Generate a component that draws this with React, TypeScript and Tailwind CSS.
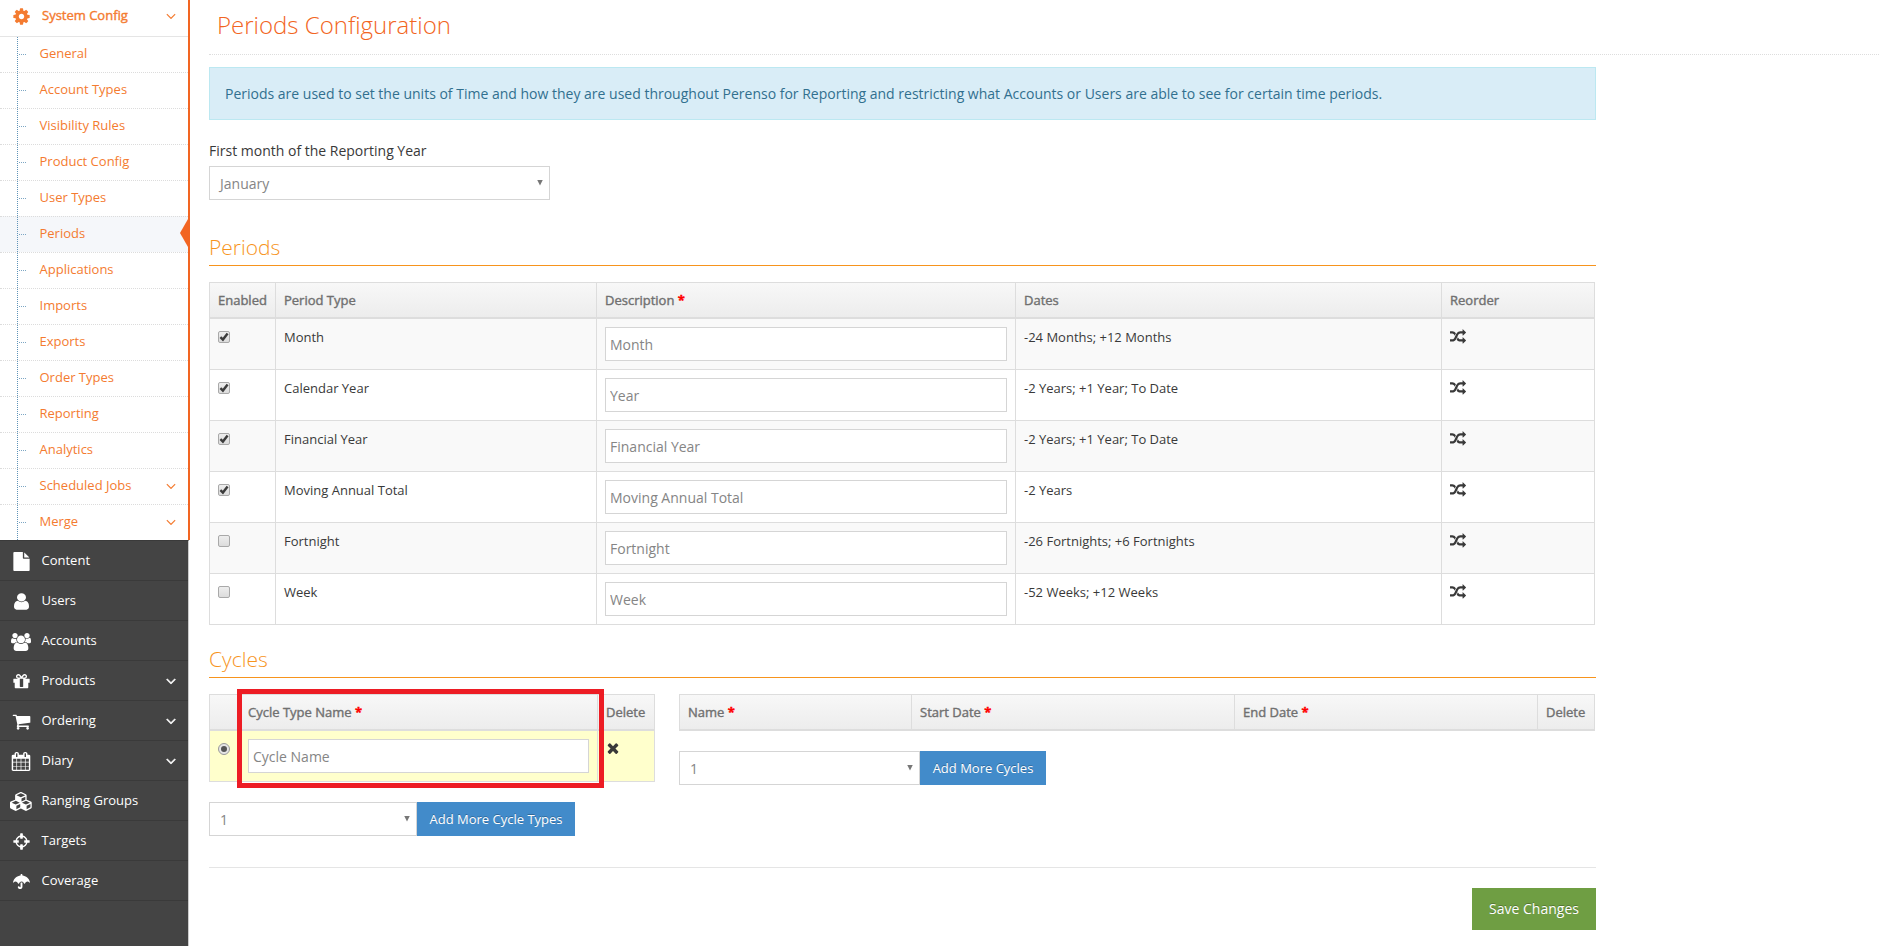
import type { ReactNode } from 'react';
import { FaUmbrella } from 'react-icons/fa';

const ICONS = {
  cog: 'M1152 896q0-106-75-181t-181-75-181 75-75 181 75 181 181 75 181-75 75-181zm512-109v222q0 12-8 23t-20 13l-185 28q-19 54-39 91 35 50 107 138 10 12 10 25t-9 23q-27 37-99 108t-94 71q-12 0-26-9l-138-108q-44 23-91 38-16 136-29 186-7 28-36 28h-222q-14 0-24.5-8.5t-11.5-21.5l-28-184q-49-16-90-37l-141 107q-10 9-25 9-14 0-25-11-126-114-165-168-7-10-7-23 0-12 8-23 15-21 51-66.5t54-70.5q-27-50-41-99l-183-27q-13-2-21-12.5t-8-23.5v-222q0-12 8-23t19-13l186-28q14-46 39-92-40-57-107-138-10-12-10-24 0-10 9-23 26-36 98.5-107.5t94.5-71.5q13 0 26 10l138 107q44-23 91-38 16-136 29-186 7-28 36-28h222q14 0 24.5 8.5t11.5 21.5l28 184q49 16 90 37l142-107q9-9 24-9 13 0 25 10 129 119 165 170 7 8 7 22 0 12-8 23-15 21-51 66.5t-54 70.5q26 50 41 98l183 28q13 2 21 12.5t8 23.5z',
  file: 'M1152 512v-472q22 14 36 28l408 408q14 14 28 36h-472zm-128 32q0 40 28 68t68 28h544v1056q0 40-28 68t-68 28h-1344q-40 0-68-28t-28-68v-1600q0-40 28-68t68-28h800v544z',
  user: 'M1536 1399q0 109-62.5 187t-150.5 78h-854q-88 0-150.5-78t-62.5-187q0-85 8.5-160.5t31.5-152 58.5-131 94-89 134.5-34.5q131 128 313 128t313-128q76 0 134.5 34.5t94 89 58.5 131 31.5 152 8.5 160.5zm-256-887q0 159-112.5 271.5t-271.5 112.5-271.5-112.5-112.5-271.5 112.5-271.5 271.5-112.5 271.5 112.5 112.5 271.5z',
  group: 'M593 896q-162 5-265 128h-134q-82 0-138-40.5t-56-118.5q0-353 124-353 6 0 43.5 21t97.5 42.5 119 21.5q67 0 133-23-5 37-5 66 0 159 81 288zm1071 637q0 120-73 189.5t-194 69.5h-874q-121 0-194-69.5t-73-189.5q0-53 3.5-103.5t14-109 26.5-108.5 43-97.5 62-81 85.5-53.5 111.5-20q10 0 43 21.5t73 48 107 48 135 21.5 135-21.5 107-48 73-48 43-21.5q61 0 111.5 20t85.5 53.5 62 81 43 97.5 26.5 108.5 14 109 3.5 103.5zm-1024-1277q0 106-75 181t-181 75-181-75-75-181 75-181 181-75 181 75 75 181zm704 384q0 159-112.5 271.5t-271.5 112.5-271.5-112.5-112.5-271.5 112.5-271.5 271.5-112.5 271.5 112.5 112.5 271.5zm576 225q0 78-56 118.5t-138 40.5h-134q-103-123-265-128 81-129 81-288 0-29-5-66 66 23 133 23 59 0 119-21.5t97.5-42.5 43.5-21q124 0 124 353zm-128-609q0 106-75 181t-181 75-181-75-75-181 75-181 181-75 181 75 75 181z',
  gift: 'M1056 1356v-716h-320v716q0 25 18 38.5t46 13.5h192q28 0 46-13.5t18-38.5zm-456-844h195l-126-161q-26-31-69-31-40 0-68 28t-28 68 28 68 68 28zm688-96q0-40-28-68t-68-28q-43 0-69 31l-125 161h194q40 0 68-28t28-68zm376 256v320q0 14-9 23t-23 9h-96v416q0 40-28 68t-68 28h-1088q-40 0-68-28t-28-68v-416h-96q-14 0-23-9t-9-23v-320q0-14 9-23t23-9h440q-93 0-158.5-65.5t-65.5-158.5 65.5-158.5 158.5-65.5q107 0 168 77l128 165 128-165q61-77 168-77 93 0 158.5 65.5t65.5 158.5-65.5 158.5-158.5 65.5h440q14 0 23 9t9 23z',
  cart: 'M704 1536q0 52-38 90t-90 38-90-38-38-90 38-90 90-38 90 38 38 90zm896 0q0 52-38 90t-90 38-90-38-38-90 38-90 90-38 90 38 38 90zm128-1088v512q0 24-16.5 42.5t-40.5 21.5l-1044 122q13 60 13 70 0 16-24 64h920q26 0 45 19t19 45-19 45-45 19h-1024q-26 0-45-19t-19-45q0-11 8-31.5t16-36 21.5-40 15.5-29.5l-177-823h-204q-26 0-45-19t-19-45 19-45 45-19h256q16 0 28.5 6.5t19.5 15.5 13 24.5 8 26 5.5 29.5 4.5 26h1201q26 0 45 19t19 45z',
  calendar: 'M192 1664h288v-288h-288v288zm352 0h320v-288h-320v288zm-352-352h288v-320h-288v320zm352 0h320v-320h-320v320zm-352-384h288v-288h-288v288zm736 736h320v-288h-320v288zm-384-736h320v-288h-320v288zm768 736h288v-288h-288v288zm-384-352h320v-320h-320v320zm-352-864v-288q0-13-9.5-22.5t-22.5-9.5h-64q-13 0-22.5 9.5t-9.5 22.5v288q0 13 9.5 22.5t22.5 9.5h64q13 0 22.5-9.5t9.5-22.5zm736 864h288v-320h-288v320zm-384-384h320v-288h-320v288zm384 0h288v-288h-288v288zm32-480v-288q0-13-9.5-22.5t-22.5-9.5h-64q-13 0-22.5 9.5t-9.5 22.5v288q0 13 9.5 22.5t22.5 9.5h64q13 0 22.5-9.5t9.5-22.5zm384-64v1280q0 52-38 90t-90 38h-1408q-52 0-90-38t-38-90v-1280q0-52 38-90t90-38h128v-96q0-66 47-113t113-47h64q66 0 113 47t47 113v96h384v-96q0-66 47-113t113-47h64q66 0 113 47t47 113v96h128q52 0 90 38t38 90z',
  cubes: 'M640 1632l384-192v-314l-384 164v342zm-64-454l404-173-404-173-404 173zm1088 454l384-192v-314l-384 164v342zm-64-454l404-173-404-173-404 173zm-448-293l384-165v-266l-384 164v267zm-64-379l441-189-441-189-441 189zm1088 518v416q0 36-19 67t-52 47l-448 224q-25 14-57 14t-57-14l-448-224q-4-2-7-4-2 2-7 4l-448 224q-25 14-57 14t-57-14l-448-224q-33-16-52-47t-19-67v-416q0-38 21.5-70t56.5-48l434-186v-400q0-38 21.5-70t56.5-48l448-192q23-10 50-10t50 10l448 192q35 16 56.5 48t21.5 70v400l434 186q36 16 57 48t21 70z',
  crosshairs: 'M1325 1024h-109q-26 0-45-19t-19-45v-128q0-26 19-45t45-19h109q-32-108-112.5-188.5t-188.5-112.5v109q0 26-19 45t-45 19h-128q-26 0-45-19t-19-45v-109q-108 32-188.5 112.5t-112.5 188.5h109q26 0 45 19t19 45v128q0 26-19 45t-45 19h-109q32 108 112.5 188.5t188.5 112.5v-109q0-26 19-45t45-19h128q26 0 45 19t19 45v109q108-32 188.5-112.5t112.5-188.5zm339-192v128q0 26-19 45t-45 19h-143q-37 161-154.5 278.5t-278.5 154.5v143q0 26-19 45t-45 19h-128q-26 0-45-19t-19-45v-143q-161-37-278.5-154.5t-154.5-278.5h-143q-26 0-45-19t-19-45v-128q0-26 19-45t45-19h143q37-161 154.5-278.5t278.5-154.5v-143q0-26 19-45t45-19h128q26 0 45 19t19 45v143q161 37 278.5 154.5t154.5 278.5h143q26 0 45 19t19 45z',
  random: 'M666 481q-60 92-137 273-22-45-37-72.5t-40.5-63.5-51-56.5-63-35-81.5-14.5h-224q-14 0-23-9t-9-23v-192q0-14 9-23t23-9h224q250 0 410 225zm1126 799q0 14-9 23l-320 320q-9 9-23 9-13 0-22.5-9.5t-9.5-22.5v-192q-32 0-85 .5t-81 1-73-1-71-5-64-10.5-63-18.5-58-28.5-59-40-55-53.5-56-69.5q59-93 136-273 22 45 37 72.5t40.5 63.5 51 56.5 63 35 81.5 14.5h256v-192q0-14 9-23t23-9q12 0 24 10l319 319q9 9 9 23zm0-896q0 14-9 23l-320 320q-9 9-23 9-13 0-22.5-9.5t-9.5-22.5v-192h-256q-48 0-87 15t-69 45-51 61.5-45 77.5q-32 62-78 171-29 66-49.5 111t-54 105-64 100-74 83-90 68.5-106.5 42-128 16.5h-224q-14 0-23-9t-9-23v-192q0-14 9-23t23-9h224q48 0 87-15t69-45 51-61.5 45-77.5q32-62 78-171 29-66 49.5-111t54-105 64-100 74-83 90-68.5 106.5-42 128-16.5h256v-192q0-14 9-23t23-9q12 0 24 10l319 319q9 9 9 23z',
  times: 'M1490 1322q0 40-28 68l-136 136q-28 28-68 28t-68-28l-294-294-294 294q-28 28-68 28t-68-28l-136-136q-28-28-28-68t28-68l294-294-294-294q-28-28-28-68t28-68l136-136q28-28 68-28t68 28l294 294 294-294q28-28 68-28t68 28l136 136q28 28 28 68t-28 68l-294 294 294 294q28 28 28 68z',
  angle: 'M1395 736q0 13-10 23l-466 466q-10 10-23 10t-23-10l-466-466q-10-10-10-23t10-23l50-50q10-10 23-10t23 10l393 393 393-393q10-10 23-10t23 10l50 50q10 10 10 23z',
};

function Icon({ name, className, box = '0 0 1792 1792' }: { name: keyof typeof ICONS; className: string; box?: string }) {
  return (
    <svg viewBox={box} preserveAspectRatio="none" fill="currentColor" className={className}>
      <path d={ICONS[name]} />
    </svg>
  );
}

const SUB_ITEMS = [
  { label: 'General' },
  { label: 'Account Types' },
  { label: 'Visibility Rules' },
  { label: 'Product Config' },
  { label: 'User Types' },
  { label: 'Periods', active: true },
  { label: 'Applications' },
  { label: 'Imports' },
  { label: 'Exports' },
  { label: 'Order Types' },
  { label: 'Reporting' },
  { label: 'Analytics' },
  { label: 'Scheduled Jobs', open: true },
  { label: 'Merge', open: true },
];

const MENU: { label: string; icon: ReactNode; open?: boolean }[] = [
  { label: 'Content', icon: <Icon name="file" className="size-[19px]" /> },
  { label: 'Users', icon: <Icon name="user" className="h-[19px] w-[21px]" /> },
  { label: 'Accounts', icon: <Icon name="group" box="0 0 1920 1792" className="h-[18px] w-5" /> },
  { label: 'Products', icon: <Icon name="gift" className="size-[19px]" />, open: true },
  { label: 'Ordering', icon: <Icon name="cart" className="size-[19px]" />, open: true },
  { label: 'Diary', icon: <Icon name="calendar" className="h-[19px] w-5" />, open: true },
  { label: 'Ranging Groups', icon: <Icon name="cubes" box="0 0 2304 1792" className="h-[19px] w-[23px] shrink-0" /> },
  { label: 'Targets', icon: <Icon name="crosshairs" className="size-[19px]" /> },
  { label: 'Coverage', icon: <FaUmbrella className="size-[17px]" /> },
];

const PERIODS = [
  { type: 'Month', description: 'Month', dates: '-24 Months; +12 Months', enabled: true },
  { type: 'Calendar Year', description: 'Year', dates: '-2 Years; +1 Year; To Date', enabled: true },
  { type: 'Financial Year', description: 'Financial Year', dates: '-2 Years; +1 Year; To Date', enabled: true },
  { type: 'Moving Annual Total', description: 'Moving Annual Total', dates: '-2 Years', enabled: true },
  { type: 'Fortnight', description: 'Fortnight', dates: '-26 Fortnights; +6 Fortnights', enabled: false },
  { type: 'Week', description: 'Week', dates: '-52 Weeks; +12 Weeks', enabled: false },
];

function Sidebar() {
  return (
    <aside className="w-[190px] shrink-0 flex flex-col text-[13px]">
      <div className="relative border-r-2 border-[#f26522] bg-white text-[#f47b30]">
        <div className="h-[37px] flex items-center border-b border-[#e5e5e5] pb-[5px] pr-[9px]">
          <span className="w-[42px] pt-[2px] flex justify-center">
            <Icon name="cog" className="size-[19px]" />
          </span>
          <span className="flex-1 pb-[2px] [-webkit-text-stroke:0.4px]">System Config</span>
          <Icon name="angle" className="size-[16px]" />
        </div>
        <ul className="relative">
          {SUB_ITEMS.map((item, i) => (
            <li
              key={item.label}
              className={`relative flex items-center pl-[39.5px] pr-[9px] border-[#dcdcdc] ${i ? 'h-9 border-t border-dotted' : 'h-[35px]'} ${item.active ? 'bg-[#f5f7fa]' : ''}`}
            >
              <span className="absolute left-[19px] top-[17px] w-[7px] border-t border-dotted border-[#7ca6c4]" />
              <span className="flex-1 pb-[3px]">{item.label}</span>
              {item.open && <Icon name="angle" className="size-[16px] mb-px" />}
              {item.active && (
                <span className="absolute right-0 top-[2px] h-7 w-2 bg-[#f26522] [clip-path:polygon(100%_0,100%_100%,0_50%)]" />
              )}
            </li>
          ))}
          <span className="absolute left-[17px] inset-y-0 border-l border-dotted border-[#5f93b8]" />
        </ul>
      </div>
      <nav className="flex-1 w-[189px] border-r border-[#ccc] border-t border-t-[#3a3a3a] bg-[#444] text-white">
        {MENU.map((item) => (
          <div key={item.label} className="h-10 flex items-center border-b border-b-[#3a3a3a] pr-[9px]">
            <span className="w-[42px] pt-[2px] flex justify-center">{item.icon}</span>
            <span className="flex-1 -ml-[0.5px] pb-[2px]">{item.label}</span>
            {item.open && <Icon name="angle" className="size-[16px] [stroke:white] [stroke-width:60]" />}
          </div>
        ))}
      </nav>
    </aside>
  );
}

function Th({ children }: { children?: ReactNode }) {
  return (
    <th className="border-[#ddd] border-t border-r border-b-2 first:border-l px-2 text-left font-normal [-webkit-text-stroke:0.4px]">
      {children}
    </th>
  );
}

function Td({ children }: { children?: ReactNode }) {
  return <td className="border-[#ddd] border-r border-b first:border-l px-2 pt-2">{children}</td>;
}

function Required() {
  return <span className="font-bold text-[#f00]">*</span>;
}

function Checkbox({ checked }: { checked: boolean }) {
  return (
    <span className="block size-3 rounded-[2px] border border-[#a9a9a9] bg-linear-to-b from-[#eee] to-[#dcdcdc]">
      {checked && (
        <svg viewBox="0 0 10 10" className="size-[10px]" fill="none" stroke="#3c3c3c" strokeWidth="2.4">
          <path d="M1.4 5.2L3.9 7.6L8.6 1.6" />
        </svg>
      )}
    </span>
  );
}

function Select({ value, className }: { value: string; className: string }) {
  return (
    <div className={`h-[34px] flex items-center border border-[#d5d5d5] bg-white pl-[10px] pr-[6px] text-sm text-[#858585] ${className}`}>
      <span className="flex-1 pt-[2px]">{value}</span>
      <span className="mb-px h-[6px] w-[6px] bg-[#777] [clip-path:polygon(0_0,100%_0,50%_100%)]" />
    </div>
  );
}

function TextInput({ value }: { value: string }) {
  return (
    <input
      type="text"
      defaultValue={value}
      className="block h-[34px] w-full border border-[#d5d5d5] bg-white px-1 text-sm text-[#858585]"
    />
  );
}

const table = 'table-fixed border-separate border-spacing-0';
const headRow = 'h-[37px] bg-linear-to-b from-[#f8f8f8] to-[#ececec] text-[#707070]';
const heading = 'h-[34px] border-b border-[#f7941d] text-[21px] leading-[30px] font-light text-[#f7941d]';
const button = 'h-[34px] shrink-0 bg-[#428bca] text-[13px] text-white [text-shadow:0_-1px_0_rgba(0,0,0,0.25)]';

export default function App() {
  return (
    <div className="flex h-[946px] overflow-hidden bg-white font-['Open_Sans',sans-serif] text-[13px] leading-5 text-[#393939]">
      <Sidebar />
      <main className="flex-1 pl-[19px] pr-[19px]">
        <h1 className="h-[55px] border-b border-dotted border-[#ddd] pl-2 pt-[9px] text-2xl font-light text-[#f26522]">
          Periods Configuration
        </h1>
        <div className="w-[1387px]">
          <div className="mt-3 h-[53px] flex items-center border border-[#bce8f1] bg-[#d9edf7] px-[15px] text-sm text-[#31708f]">
            Periods are used to set the units of Time and how they are used throughout Perenso for Reporting and restricting what
            Accounts or Users are able to see for certain time periods.
          </div>
          <div className="mt-[21px] mb-[5px] text-sm">First month of the Reporting Year</div>
          <Select value="January" className="w-[341px]" />

          <h2 className={`mt-8 ${heading}`}>Periods</h2>
          <table className={`mt-4 w-[1386px] ${table}`}>
            <colgroup>
              <col className="w-[67px]" />
              <col className="w-[321px]" />
              <col className="w-[419px]" />
              <col className="w-[426px]" />
              <col />
            </colgroup>
            <thead>
              <tr className={headRow}>
                <Th>Enabled</Th>
                <Th>Period Type</Th>
                <Th>
                  Description <Required />
                </Th>
                <Th>Dates</Th>
                <Th>Reorder</Th>
              </tr>
            </thead>
            <tbody>
              {PERIODS.map((p) => (
                <tr key={p.type} className="h-[51px] align-top odd:bg-[#f9f9f9]">
                  <Td>
                    <div className="pt-1">
                      <Checkbox checked={p.enabled} />
                    </div>
                  </Td>
                  <Td>{p.type}</Td>
                  <Td>
                    <TextInput value={p.description} />
                  </Td>
                  <Td>{p.dates}</Td>
                  <Td>
                    <Icon name="random" className="mt-[2px] size-4" />
                  </Td>
                </tr>
              ))}
            </tbody>
          </table>

          <h2 className={`mt-[19px] ${heading}`}>Cycles</h2>
          <div className="mt-4 flex gap-6">
            <div className="relative w-[446px]">
              <table className={`w-full ${table}`}>
                <colgroup>
                  <col className="w-[31px]" />
                  <col className="w-[358px]" />
                  <col />
                </colgroup>
                <thead>
                  <tr className={headRow}>
                    <Th />
                    <Th>
                      Cycle Type Name <Required />
                    </Th>
                    <Th>Delete</Th>
                  </tr>
                </thead>
                <tbody>
                  <tr className="h-[51px] align-top bg-[#ffffcc]">
                    <Td>
                      <span className="mt-1 flex size-3 items-center justify-center rounded-full border border-[#999] bg-[#e6e6e6]">
                        <span className="size-[6px] rounded-full bg-[#555]" />
                      </span>
                    </Td>
                    <Td>
                      <TextInput value="Cycle Name" />
                    </Td>
                    <Td>
                      <Icon name="times" className="-ml-px mt-px size-[16px]" />
                    </Td>
                  </tr>
                </tbody>
              </table>
              <div className="absolute left-[28px] -top-[5px] h-[99px] w-[367px] border-5 border-[#ed1c24]" />
              <div className="mt-5 flex">
                <Select value="1" className="w-[208px]" />
                <button className={`${button} w-[158px]`}>Add More Cycle Types</button>
              </div>
            </div>
            <div className="w-[916px]">
              <table className={`w-full ${table}`}>
                <colgroup>
                  <col className="w-[233px]" />
                  <col className="w-[323px]" />
                  <col className="w-[303px]" />
                  <col />
                </colgroup>
                <thead>
                  <tr className={headRow}>
                    <Th>
                      Name <Required />
                    </Th>
                    <Th>
                      Start Date <Required />
                    </Th>
                    <Th>
                      End Date <Required />
                    </Th>
                    <Th>Delete</Th>
                  </tr>
                </thead>
              </table>
              <div className="mt-5 flex">
                <Select value="1" className="w-[241px]" />
                <button className={`${button} w-[126px]`}>Add More Cycles</button>
              </div>
            </div>
          </div>

          <div className="mt-[31px] flex justify-end border-t border-[#e5e5e5] pt-5">
            <button className="h-[42px] w-[124px] bg-[#6f9e43] text-sm text-white [text-shadow:0_-1px_0_rgba(0,0,0,0.25)]">
              Save Changes
            </button>
          </div>
        </div>
      </main>
    </div>
  );
}
